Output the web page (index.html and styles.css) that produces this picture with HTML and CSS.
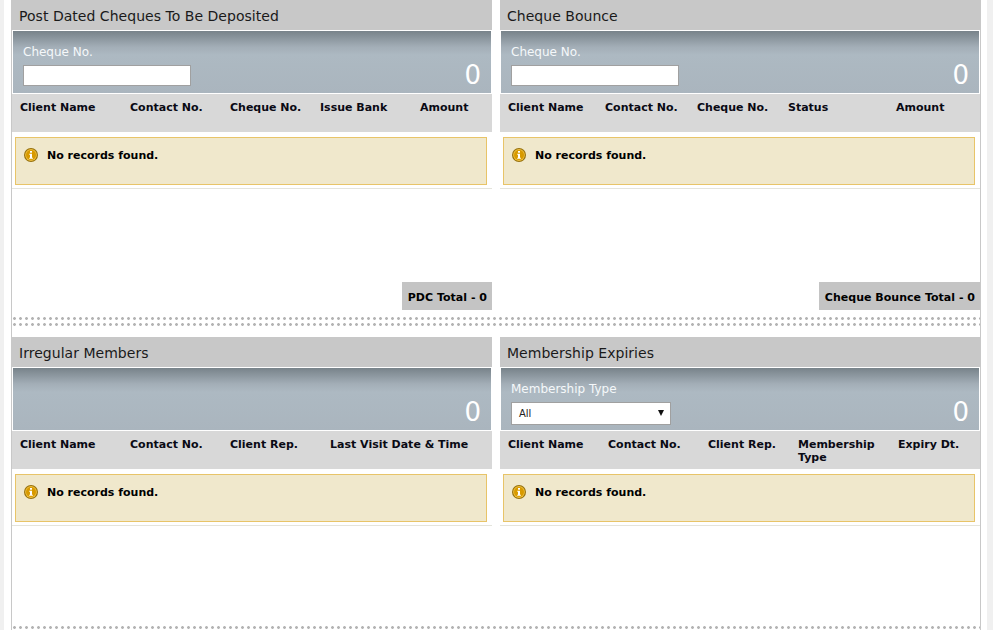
FILE: index.html
```html
<!DOCTYPE html>
<html lang="en">
<head>
<meta charset="utf-8">
<title>Dashboard</title>
<link rel="stylesheet" href="styles.css">
</head>
<body>
<svg class="defs" width="0" height="0" aria-hidden="true"><defs>
<symbol id="info" viewBox="0 0 14 14">
<circle cx="7" cy="7" r="7" fill="#96700a"/>
<circle cx="7" cy="7" r="5.9" fill="#f0c040"/>
<circle cx="7" cy="7" r="5" fill="#d89a00"/>
<rect x="6" y="3" width="2" height="1.7" fill="#fff"/>
<path d="M5.2 5.7h2.8v4h.9v1.1H5.2V9.7H6V6.8h-.8z" fill="#fff"/>
</symbol>
</defs></svg>
<main class="page">
  <div class="row">
    <section class="panel">
      <h2 class="title">Post Dated Cheques To Be Deposited</h2>
      <div class="filter">
        <div class="field"><label class="field-label">Cheque No.</label><input class="text-input" type="text"></div>
        <span class="count">0</span>
      </div>
      <div class="heads cols-pdc"><span>Client Name</span><span>Contact No.</span><span>Cheque No.</span><span>Issue Bank</span><span>Amount</span></div>
      <div class="body">
        <div class="message"><svg class="icon"><use href="#info"/></svg><span>No records found.</span></div>
        <div class="total">PDC Total - 0</div>
      </div>
    </section>
    <section class="panel">
      <h2 class="title">Cheque Bounce</h2>
      <div class="filter">
        <div class="field"><label class="field-label">Cheque No.</label><input class="text-input" type="text"></div>
        <span class="count">0</span>
      </div>
      <div class="heads cols-bounce"><span>Client Name</span><span>Contact No.</span><span>Cheque No.</span><span>Status</span><span>Amount</span></div>
      <div class="body">
        <div class="message"><svg class="icon"><use href="#info"/></svg><span>No records found.</span></div>
        <div class="total">Cheque Bounce Total - 0</div>
      </div>
    </section>
  </div>
  <div class="dots"></div>
  <div class="row">
    <section class="panel">
      <h2 class="title">Irregular Members</h2>
      <div class="filter">
        <span class="count">0</span>
      </div>
      <div class="heads cols-irregular"><span>Client Name</span><span>Contact No.</span><span>Client Rep.</span><span>Last Visit Date &amp; Time</span></div>
      <div class="body">
        <div class="message"><svg class="icon"><use href="#info"/></svg><span>No records found.</span></div>
      </div>
    </section>
    <section class="panel">
      <h2 class="title">Membership Expiries</h2>
      <div class="filter">
        <div class="field"><label class="field-label">Membership Type</label><div class="select-box">All</div></div>
        <span class="count">0</span>
      </div>
      <div class="heads cols-expiry"><span>Client Name</span><span>Contact No.</span><span>Client Rep.</span><span>Membership Type</span><span>Expiry Dt.</span></div>
      <div class="body">
        <div class="message"><svg class="icon"><use href="#info"/></svg><span>No records found.</span></div>
      </div>
    </section>
  </div>
  <div class="dots-single"></div>
</main>
</body>
</html>
```
FILE: styles.css
```css
html, body { margin: 0; padding: 0; height: 630px; overflow: hidden; }
body {
  background: #fff;
  font-family: "DejaVu Sans", Verdana, sans-serif;
  color: #000;
  border-left: 4px solid #f0f0f0;
  border-right: 6px solid #f0f0f0;
  box-sizing: border-box;
}
.defs { position: absolute; }
.page {
  margin-left: 7px;
  width: 970px;
  box-sizing: border-box;
  border-left: 1px solid #c8c8c8;
  border-right: 1px solid #c8c8c8;
  height: 630px;
  overflow: hidden;
}
.row { display: flex; gap: 8px; }
.panel { width: 480px; height: 310px; display: flex; flex-direction: column; }
.title {
  margin: 0;
  height: 30px;
  line-height: 32px;
  padding-left: 7px;
  background: #c8c8c8;
  font-size: 14px;
  font-weight: normal;
  letter-spacing: 0.03px;
  color: #1a1a1a;
}
.filter {
  height: 62px;
  margin: 1px 1px 0;
  background: linear-gradient(#78838a 0, #a3aeb7 16px, #adb9c2 24px, #aab5be 100%);
  display: flex;
  justify-content: space-between;
  align-items: flex-start;
  padding: 0 10px 0 10px;
}
.filter .count { margin-left: auto; }
.field { display: flex; flex-direction: column; padding-top: 14px; }
.field-label { font-size: 12px; line-height: 14px; color: #f5f8fa; margin-bottom: 6px; }
.text-input {
  width: 168px;
  height: 21px;
  box-sizing: border-box;
  border: 1px solid #a0a0a0;
  background: #fff;
  padding: 0;
  margin: 0;
  display: block;
}
.select-box {
  width: 160px;
  height: 23px;
  box-sizing: border-box;
  border: 1px solid #a0a0a0;
  background: #fff;
  font-size: 10px;
  line-height: 22px;
  padding-left: 7px;
  color: #222;
  position: relative;
}
.select-box::after {
  content: "";
  position: absolute;
  right: 6px;
  top: 7px;
  border-left: 3px solid transparent;
  border-right: 3px solid transparent;
  border-top: 6px solid #111;
}
.count { font-size: 26px; line-height: 30px; color: #fff; margin-top: 29px; }
.heads {
  display: grid;
  height: 38px;
  background: #d8d8d8;
  margin-top: 1px;
  padding: 7px 0 0 8px;
  box-sizing: border-box;
  font-size: 11px;
  font-weight: bold;
  line-height: 13px;
  color: #0a0a14;
}
.cols-pdc { grid-template-columns: 110px 100px 90px 100px 1fr; }
.cols-bounce { grid-template-columns: 97px 92px 91px 108px 1fr; }
.cols-irregular { grid-template-columns: 110px 100px 100px 1fr; }
.cols-expiry { grid-template-columns: 100px 100px 90px 100px 1fr; }
.body { flex: 1; display: flex; flex-direction: column; }
.message {
  order: 0;
  margin: 5px 5px 0 3px;
  height: 48px;
  box-sizing: border-box;
  background: #f0e8cc;
  border: 1px solid #e8c468;
  display: flex;
  align-items: flex-start;
  gap: 9px;
  padding: 10px 0 0 8px;
  font-size: 11px;
  font-weight: bold;
  line-height: 16px;
}
.icon { width: 14px; height: 14px; flex: none; }
.body::before { content: ""; order: 1; height: 1px; background: #e4e4dc; margin-top: 3px; }
.total {
  order: 2;
  margin-top: auto;
  align-self: flex-end;
  height: 28px;
  padding: 0 5px 0 6px;
  background: #c4c4c4;
  font-size: 11px;
  font-weight: bold;
  letter-spacing: 0.02px;
  line-height: 31px;
}
.dots {
  height: 9px;
  margin: 7px 0 11px;
  background-image: radial-gradient(circle at 2.5px 1.5px, #b4b4b4 1.2px, transparent 1.6px);
  background-size: 6px 6px;
}
.dots-single {
  margin-top: -21px;
  height: 3px;
  position: relative;
  background-image: radial-gradient(circle at 2.5px 1.5px, #b4b4b4 1.2px, transparent 1.6px);
  background-size: 6px 6px;
}
```
